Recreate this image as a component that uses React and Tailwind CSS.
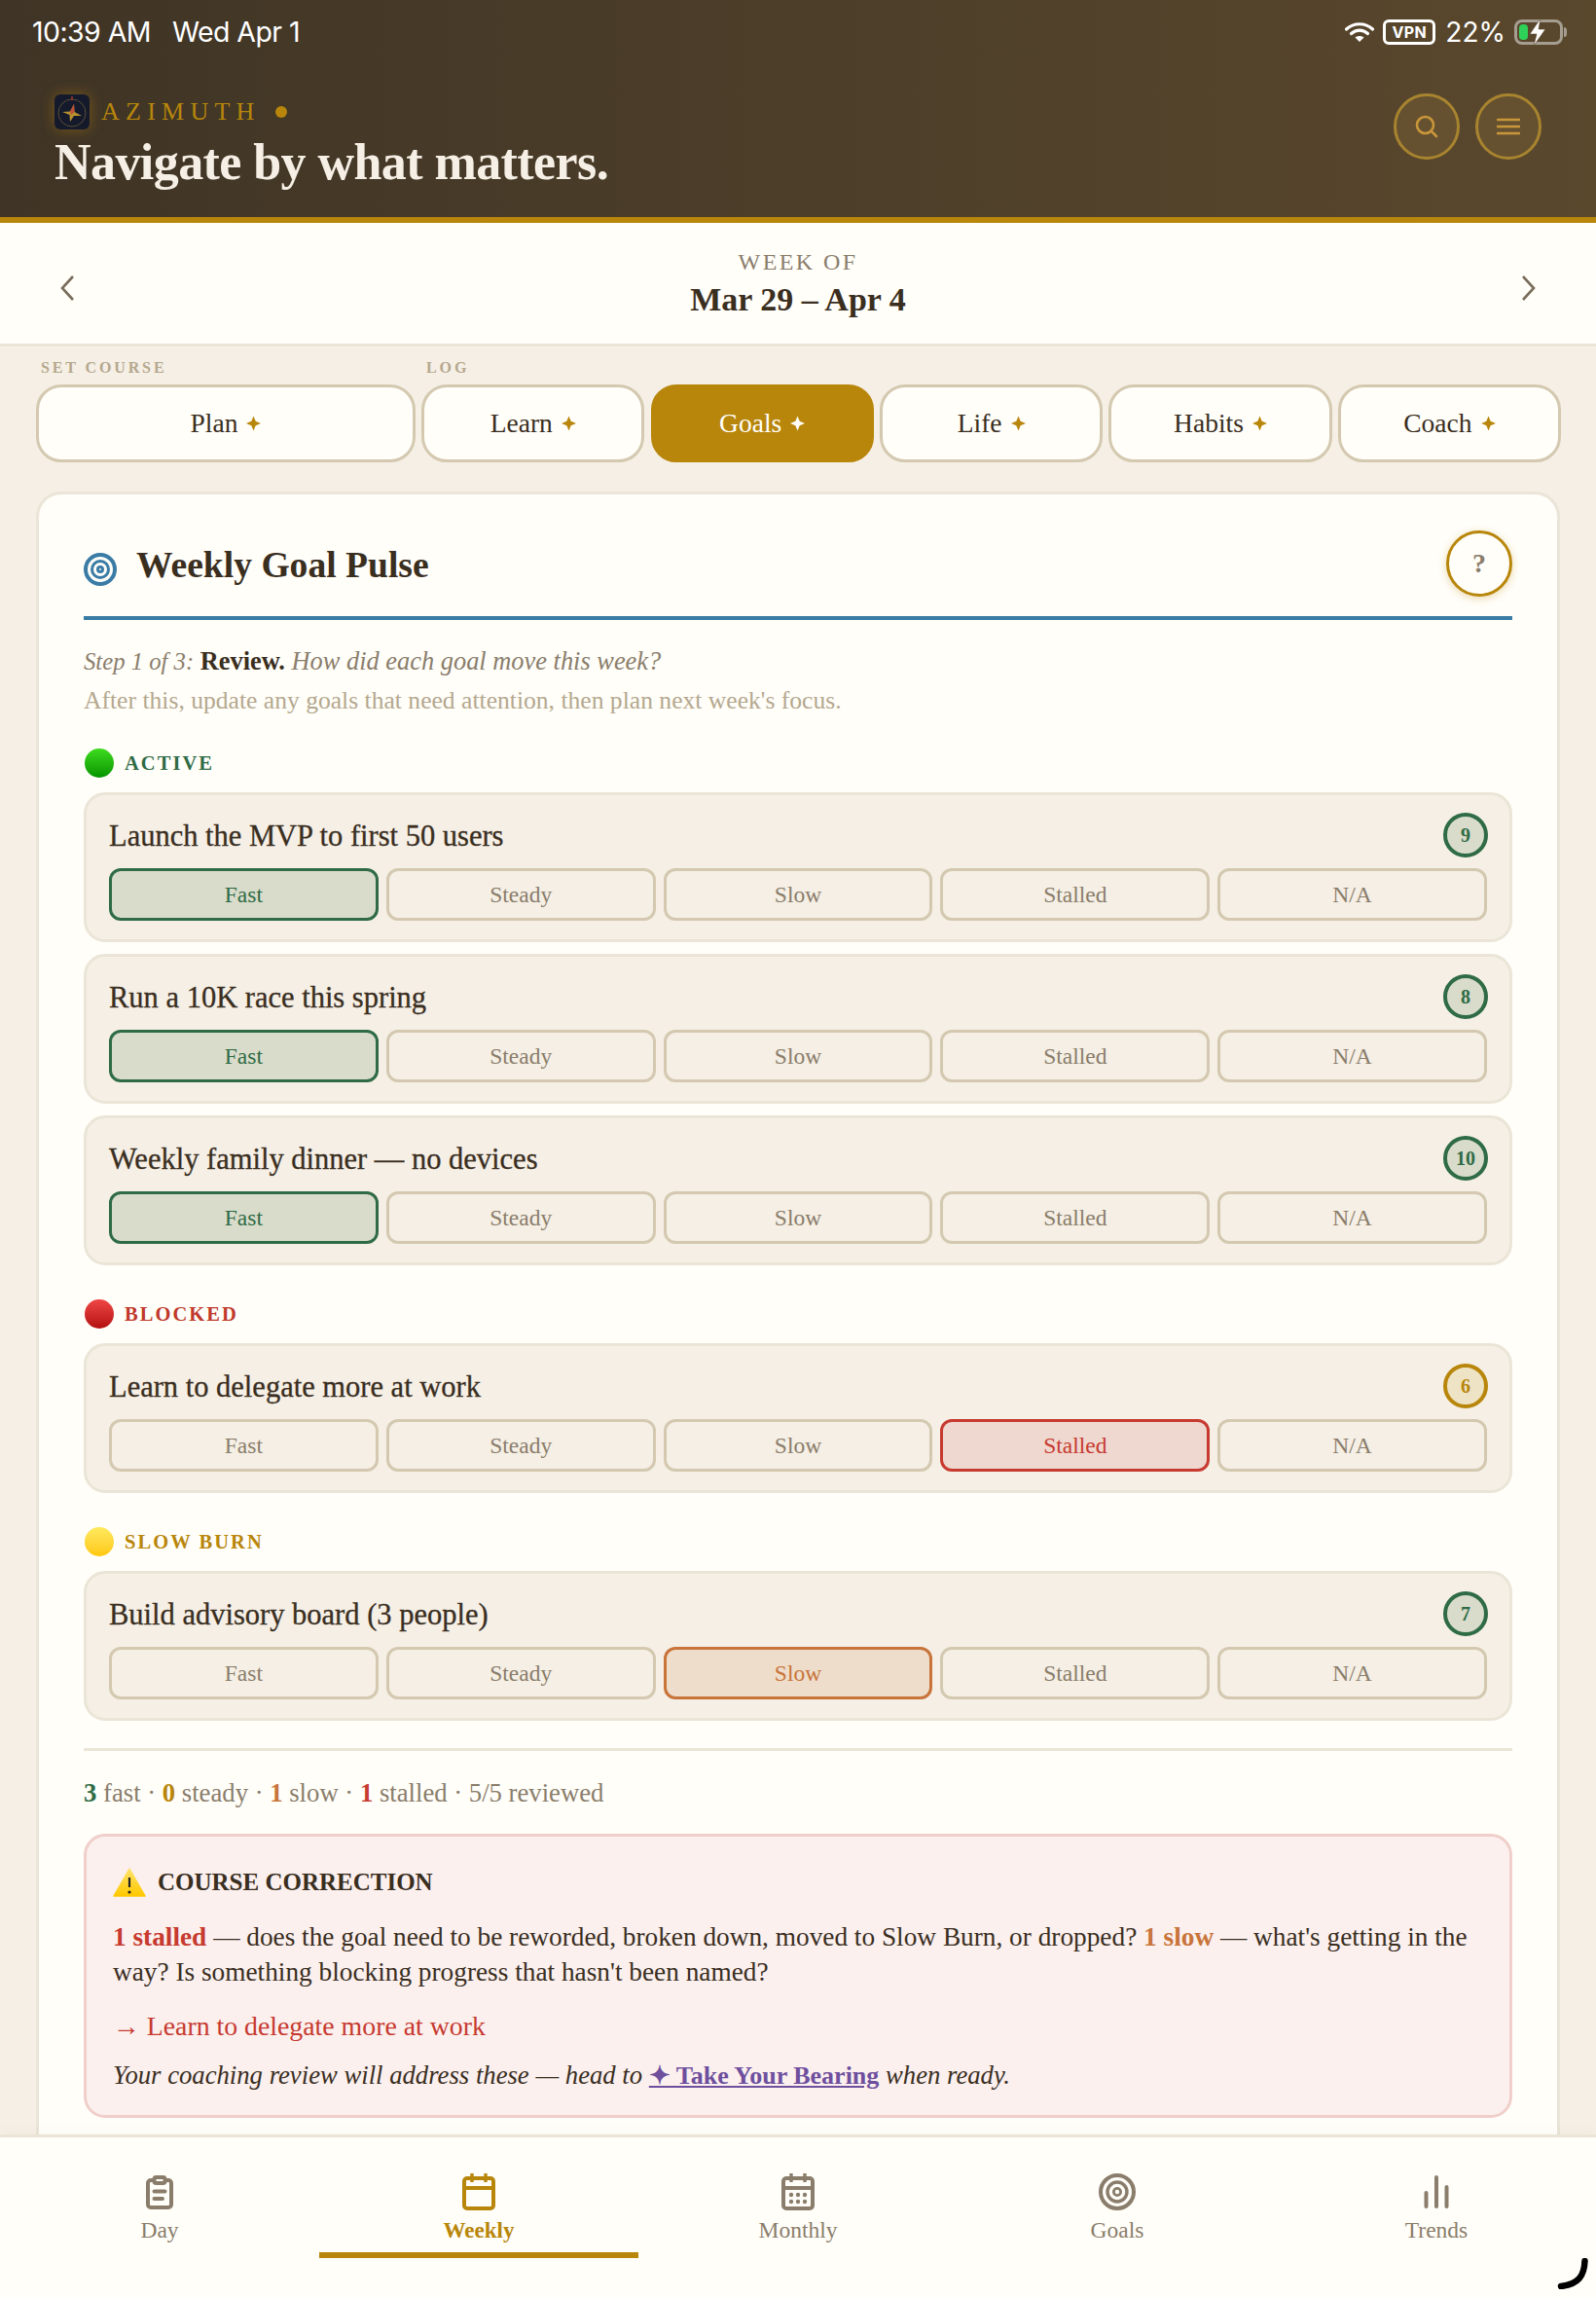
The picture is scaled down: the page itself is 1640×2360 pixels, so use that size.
import React from "react";

const serif = "font-['Liberation_Serif',serif]";

function Spark({ className }) {
  return <svg viewBox="0 0 16 16" className={className}><path d="M8 0 L10.3 5.7 L16 8 L10.3 10.3 L8 16 L5.7 10.3 L0 8 L5.7 5.7 Z" fill="currentColor" /></svg>;
}

function Tab({ label, active, wide }) {
  return (
    <div className={`flex h-20 items-center justify-center gap-[9px] rounded-[26px] border-[3px] text-[27.5px] ${wide ? "w-[390px] shrink-0" : "flex-1"} ${active ? "border-[#b8860b] bg-[#b8860b] text-[#fffef9]" : "border-[#d4c9b0] bg-[#fffef9] text-[#3a2e1f]"}`}>
      <span>{label}</span>
      <Spark className={`h-[16px] w-[15px] ${active ? "text-[#fffef9]" : "text-[#b8860b]"}`} />
    </div>
  );
}

const RATINGS = ["Fast", "Steady", "Slow", "Stalled", "N/A"];
const SEL = {
  Fast: "border-[#2f6b45] bg-[#d9dccb] text-[#2f6b45]",
  Slow: "border-[#c8743a] bg-[#eeddcb] text-[#c8743a]",
  Stalled: "border-[#c73a30] bg-[#efd8d0] text-[#c73a30]",
};

function Goal({ title, score, sel, gold }) {
  return (
    <div className="rounded-[22px] border-[3px] border-[#ebe5d8] bg-[#f5efe5] px-[23px] pt-[17px]">
      <div className="flex h-[48px] items-center justify-between">
        <span className="pt-[2px] text-[30.5px] leading-none text-[#3a2e1f] [-webkit-text-stroke:0.3px]">{title}</span>
        <span className={`-mr-px flex h-[46px] w-[46px] items-center justify-center rounded-full border-[4px] text-[20px] font-bold ${gold ? "border-[#b8860b] bg-[#efe3c5] text-[#b8860b]" : "border-[#2f6b45] bg-[#d9dccb] text-[#2f6b45]"}`}>{score}</span>
      </div>
      <div className="mb-[19px] mt-[10px] flex gap-2">
        {RATINGS.map((r) => (
          <div key={r} className={`flex h-[54px] flex-1 items-center justify-center rounded-[12px] border-[3px] pt-[2px] text-[23.5px] ${r === sel ? SEL[r] : "border-[#d4c9b0] text-[#8a7d6b]"}`}>{r}</div>
        ))}
      </div>
    </div>
  );
}

function Section({ color, label, text, className, children }) {
  return (
    <div className={className}>
      <div className="flex h-[30px] items-center gap-[11px]">
        <span className={`ml-px h-[30px] w-[30px] rounded-full ${color}`} />
        <span className={`text-[20.5px] font-bold uppercase leading-none tracking-[0.1em] ${text}`}>{label}</span>
      </div>
      <div className="mt-[15px] flex flex-col gap-[12px]">{children}</div>
    </div>
  );
}

function StatusBar() {
  return (
    <div className="flex h-[66px] items-center justify-between pl-[33px] pr-[30px] font-['Inter',sans-serif] text-white">
      <div className="flex gap-[22px] text-[28.5px] tracking-[-0.02em]">
        <span>10:39 AM</span>
        <span>Wed Apr 1</span>
      </div>
      <div className="flex items-center">
        <svg viewBox="0 0 30 22" className="h-[22px] w-[30px]">
          <path d="M1.5 8 C9 1 21 1 28.5 8" fill="none" stroke="#fff" strokeWidth="3.2" strokeLinecap="round" />
          <path d="M6.5 12.5 C11.5 8 18.5 8 23.5 12.5" fill="none" stroke="#fff" strokeWidth="3.2" strokeLinecap="round" />
          <path d="M15 21 L10.5 16.5 C13 14.5 17 14.5 19.5 16.5 Z" fill="#fff" />
        </svg>
        <span className="ml-[9px] flex h-[26px] w-[54px] items-center justify-center rounded-[6px] border-[3px] border-white text-[16px] font-bold tracking-wide">VPN</span>
        <span className="ml-[10px] text-[28px] leading-none">22%</span>
        <div className="relative ml-[9px] flex items-center">
          <div className="h-[26px] w-[50px] rounded-[8px] border-[3px] border-[#a49d90] p-[2px]">
            <div className="h-full w-[9px] rounded-[4px] bg-[#30d158]" />
          </div>
          <span className="ml-[1px] h-[10px] w-[3px] rounded-r-[3px] bg-[#a49d90]" />
          <svg viewBox="0 0 18 28" className="absolute left-[15px] top-[-1px] h-[28px] w-[18px]">
            <path d="M12 0 L1 16 H8 L5 28 L17 11 H10 Z" fill="#fff" stroke="#59482d" strokeWidth="0.6" />
          </svg>
        </div>
      </div>
    </div>
  );
}

function Logo() {
  return (
    <div className="relative h-[36px] w-[36px] shrink-0 rounded-[6px] bg-[#141a2c] shadow-[0_0_14px_rgba(184,134,11,0.45)]">
      <svg viewBox="0 0 36 36" className="h-full w-full">
        <circle cx="18" cy="19" r="14" fill="none" stroke="#6b5a33" strokeWidth="0.8" />
        <path d="M18 2 V6" stroke="#c0392b" strokeWidth="1.2" />
        <path d="M20 10 L20.5 18 L28 22 L20 22 L16 28 L15.5 21 L8 18 L16 17.5 Z" fill="#b8922e" />
        <path d="M20 10 L20.5 18 L17 21 L16 17.5 Z" fill="#c0503a" />
      </svg>
    </div>
  );
}

function NavItem({ label, active, children }) {
  return (
    <div className={`relative flex flex-1 flex-col items-center pt-[36px] ${active ? "text-[#b8860b]" : "text-[#8a7d6b]"}`}>
      <div className="flex h-[40px] items-center justify-center">{children}</div>
      <span className={`mt-[8px] leading-none ${active ? "text-[23px] font-bold" : "text-[23.5px]"}`}>{label}</span>
      {active && <span className="absolute left-0 right-0 top-[118px] h-[6px] bg-[#b8860b]" />}
    </div>
  );
}

export default function App() {
  return (
    <div className={`flex h-[2360px] w-[1640px] flex-col overflow-hidden bg-[#f5efe5] ${serif}`}>
      <header className="h-[229px] shrink-0 border-b-[6px] border-[#b8860b] bg-gradient-to-r from-[#3f3425] to-[#5a482d]">
        <StatusBar />
        <div className="flex items-start justify-between pl-[56px] pr-[56px] pt-[30px]">
          <div>
            <div className="flex h-[38px] items-center">
              <Logo />
              <span className="ml-[12px] text-[26px] leading-none tracking-[0.24em] text-[#b8860b]">AZIMUTH</span>
              <span className="ml-[15px] h-[12px] w-[12px] rounded-full bg-[#b8860b]" />
            </div>
            <h1 className="mt-[5px] text-[52px] font-bold leading-[56px] tracking-[-0.011em] text-[#f5efe5]">Navigate by what matters.</h1>
          </div>
          <div className="flex gap-[16px]">
            <div className="flex h-[68px] w-[68px] items-center justify-center rounded-full border-[3px] border-[#a8842f] bg-[#655030]">
              <svg viewBox="0 0 24 24" className="h-[24px] w-[24px]" fill="none" stroke="#c9973a" strokeWidth="2.6" strokeLinecap="round"><circle cx="10.5" cy="10.5" r="8.5" /><path d="M17 17 L22 22" /></svg>
            </div>
            <div className="flex h-[68px] w-[68px] items-center justify-center rounded-full border-[3px] border-[#a8842f] bg-[#655030]">
              <svg viewBox="0 0 24 18" className="h-[18px] w-[24px]" fill="none" stroke="#c9973a" strokeWidth="2.6" strokeLinecap="round"><path d="M1 2 H23 M1 9 H23 M1 16 H23" /></svg>
            </div>
          </div>
        </div>
      </header>

      <div className="relative flex h-[127px] shrink-0 flex-col items-center border-b-[3px] border-[#ebe5d8] bg-[#fffef9] pt-[28px]">
        <svg viewBox="0 0 14 26" className="absolute left-[62px] top-[54px] h-[26px] w-[14px]" fill="none" stroke="#7a6d5b" strokeWidth="2.6"><path d="M13 1 L2 13 L13 25" /></svg>
        <svg viewBox="0 0 14 26" className="absolute right-[62px] top-[54px] h-[26px] w-[14px]" fill="none" stroke="#7a6d5b" strokeWidth="2.6"><path d="M1 1 L12 13 L1 25" /></svg>
        <span className="text-[24px] leading-none tracking-[0.1em] text-[#8a7d6b]">WEEK OF</span>
        <span className="mt-[10px] text-[34px] font-bold leading-none text-[#3a2e1f]">Mar 29 – Apr 4</span>
      </div>

      <div className="flex-1 overflow-hidden px-[37px]">
        <div className="relative h-[39px] text-[16px] font-bold leading-none tracking-[0.18em] text-[#b5a88f]">
          <span className="absolute left-[5px] top-[14px]">SET COURSE</span>
          <span className="absolute left-[401px] top-[14px]">LOG</span>
        </div>
        <div className="-mr-px flex gap-[6.2px]">
          <Tab label="Plan" wide />
          <Tab label="Learn" />
          <Tab label="Goals" active />
          <Tab label="Life" />
          <Tab label="Habits" />
          <Tab label="Coach" />
        </div>

        <div className="mt-[30px] h-[1800px] rounded-[26px] border-[3px] border-[#ebe5d8] bg-[#fffef9] px-[46px] pt-[37px]">
          <div className="flex h-[92px] items-start justify-between border-b-[4px] border-[#3a7ca5]">
            <div className="flex items-center gap-[20px] pt-[12px]">
              <svg viewBox="0 0 34 34" className="h-[34px] w-[34px] translate-y-[4px]" fill="none" stroke="#3a7ca5"><circle cx="17" cy="17" r="15" strokeWidth="4" /><circle cx="17" cy="17" r="8.5" strokeWidth="3" /><circle cx="17" cy="17" r="2.5" strokeWidth="3" /></svg>
              <h2 className="text-[37.6px] font-bold leading-[48px] text-[#3a2e1f]">Weekly Goal Pulse</h2>
            </div>
            <div className="flex h-[68px] w-[68px] items-center justify-center rounded-full border-[3px] border-[#b8860b] bg-[#fffef9] text-[28px] font-bold text-[#8a7d6b] shadow-[0_2px_8px_rgba(184,134,11,0.3)]">?</div>
          </div>

          <p className="mt-[25px] text-[26.4px] italic leading-[34px] text-[#8a7d6b]"><span className="text-[24.7px]">Step 1 of 3:</span> <strong className="font-bold not-italic text-[#3a2e1f]">Review.</strong> How did each goal move this week?</p>
          <p className="mt-[6px] text-[25.6px] leading-[34px] text-[#b5a88f]">After this, update any goals that need attention, then plan next week's focus.</p>

          <Section className="mt-[32px]" color="bg-gradient-to-b from-[#3ddc1f] to-[#009400]" label="Active" text="text-[#2f6b45]">
            <Goal title="Launch the MVP to first 50 users" score="9" sel="Fast" />
            <Goal title="Run a 10K race this spring" score="8" sel="Fast" />
            <Goal title="Weekly family dinner — no devices" score="10" sel="Fast" />
          </Section>
          <Section className="mt-[35px]" color="bg-gradient-to-b from-[#f04545] to-[#b30d0d]" label="Blocked" text="text-[#c0392b]">
            <Goal title="Learn to delegate more at work" score="6" sel="Stalled" gold />
          </Section>
          <Section className="mt-[35px]" color="bg-gradient-to-b from-[#ffe95c] to-[#ffc800]" label="Slow Burn" text="text-[#b8860b]">
            <Goal title="Build advisory board (3 people)" score="7" sel="Slow" />
          </Section>

          <div className="mt-[28px] border-t-[3px] border-[#ebe5d8] pt-[26px] text-[26.7px] leading-[34px] text-[#8a7d6b]">
            <b className="text-[#2f6b45]">3</b> fast · <b className="text-[#b8860b]">0</b> steady · <b className="text-[#c8743a]">1</b> slow · <b className="text-[#c73a30]">1</b> stalled · 5/5 reviewed
          </div>

          <div className="mt-[25px] h-[292px] rounded-[22px] border-[3px] border-[#f0cfca] bg-[#fbf0ee] px-[27px] pt-[30px] text-[#3a2e1f]">
            <div className="flex h-[34px] items-center gap-[12px]">
              <svg viewBox="0 0 34 30" className="h-[30px] w-[34px]"><defs><linearGradient id="w" x1="0" y1="0" x2="0" y2="1"><stop offset="0" stopColor="#ffe36a" /><stop offset="1" stopColor="#ffc800" /></linearGradient></defs><path d="M17 1 L33 29 H1 Z" fill="url(#w)" stroke="url(#w)" strokeLinejoin="round" strokeWidth="1.5" /><path d="M17 10 V20" stroke="#222" strokeWidth="2.2" /><circle cx="17" cy="25" r="1.6" fill="#222" /></svg>
              <span className="text-[25px] font-bold">COURSE CORRECTION</span>
            </div>
            <p className="mt-[21px] text-[27.3px] leading-[36px]"><b className="text-[#c73a30]">1 stalled</b> — does the goal need to be reworded, broken down, moved to Slow Burn, or dropped? <b className="text-[#c8743a]">1 slow</b> — what's getting in the way? Is something blocking progress that hasn't been named?</p>
            <p className="mt-[20px] text-[27.8px] leading-[36px] text-[#c73a30]">→ Learn to delegate more at work</p>
            <p className="mt-[14px] text-[26.7px] italic leading-[36px]">Your coaching review will address these — head to <b className="text-[26px] not-italic text-[#6e4f9e] underline">✦ Take Your Bearing</b> when ready.</p>
          </div>
        </div>
      </div>

      <nav className="relative z-10 flex h-[167px] shrink-0 border-t-[3px] border-[#ebe5d8] bg-[#fffef9] shadow-[0_-6px_12px_rgba(0,0,0,0.02)]">
        <NavItem label="Day">
          <svg viewBox="0 0 28 35" className="h-[35px] w-[28px]" fill="none" stroke="currentColor" strokeWidth="4"><rect x="2" y="5" width="24" height="28" rx="3" /><rect x="8.5" y="2" width="11" height="6" rx="2" fill="#fffef9" /><path d="M8.5 16.5 H19.5 M8.5 24 H17" strokeWidth="4" strokeLinecap="round" /></svg>
        </NavItem>
        <NavItem label="Weekly" active>
          <svg viewBox="0 0 34 38" className="h-[38px] w-[34px]" fill="none" stroke="currentColor" strokeWidth="4"><rect x="2" y="5" width="30" height="31" rx="3" /><path d="M2 15 H32" /><path d="M10 0 V9 M24 0 V9" strokeWidth="3.4" /></svg>
        </NavItem>
        <NavItem label="Monthly">
          <svg viewBox="0 0 34 38" className="h-[38px] w-[34px]" fill="none" stroke="currentColor" strokeWidth="4"><rect x="2" y="5" width="30" height="31" rx="3" /><path d="M2 15 H32" /><path d="M10 0 V9 M24 0 V9" strokeWidth="3.4" /><g fill="currentColor" stroke="none"><circle cx="10" cy="22" r="2.2" /><circle cx="17" cy="22" r="2.2" /><circle cx="24" cy="22" r="2.2" /><circle cx="10" cy="29" r="2.2" /><circle cx="17" cy="29" r="2.2" /><circle cx="24" cy="29" r="2.2" /></g></svg>
        </NavItem>
        <NavItem label="Goals">
          <svg viewBox="0 0 38 38" className="h-[38px] w-[38px]" fill="none" stroke="currentColor"><circle cx="19" cy="19" r="17" strokeWidth="4" /><circle cx="19" cy="19" r="10" strokeWidth="3.4" /><circle cx="19" cy="19" r="3.6" strokeWidth="2.8" /></svg>
        </NavItem>
        <NavItem label="Trends">
          <svg viewBox="0 0 26 34" className="h-[34px] w-[26px]" fill="none" stroke="currentColor" strokeWidth="4" strokeLinecap="round"><path d="M2.5 18 V32 M13 2 V32 M23.5 12 V32" /></svg>
        </NavItem>
        <svg viewBox="0 0 32 32" className="absolute bottom-[8px] right-[8px] h-[32px] w-[32px]" fill="none" stroke="#000" strokeWidth="6.5" strokeLinecap="round"><path d="M28.5 3 C28 18 22 27 4 29" /></svg>
      </nav>
    </div>
  );
}
